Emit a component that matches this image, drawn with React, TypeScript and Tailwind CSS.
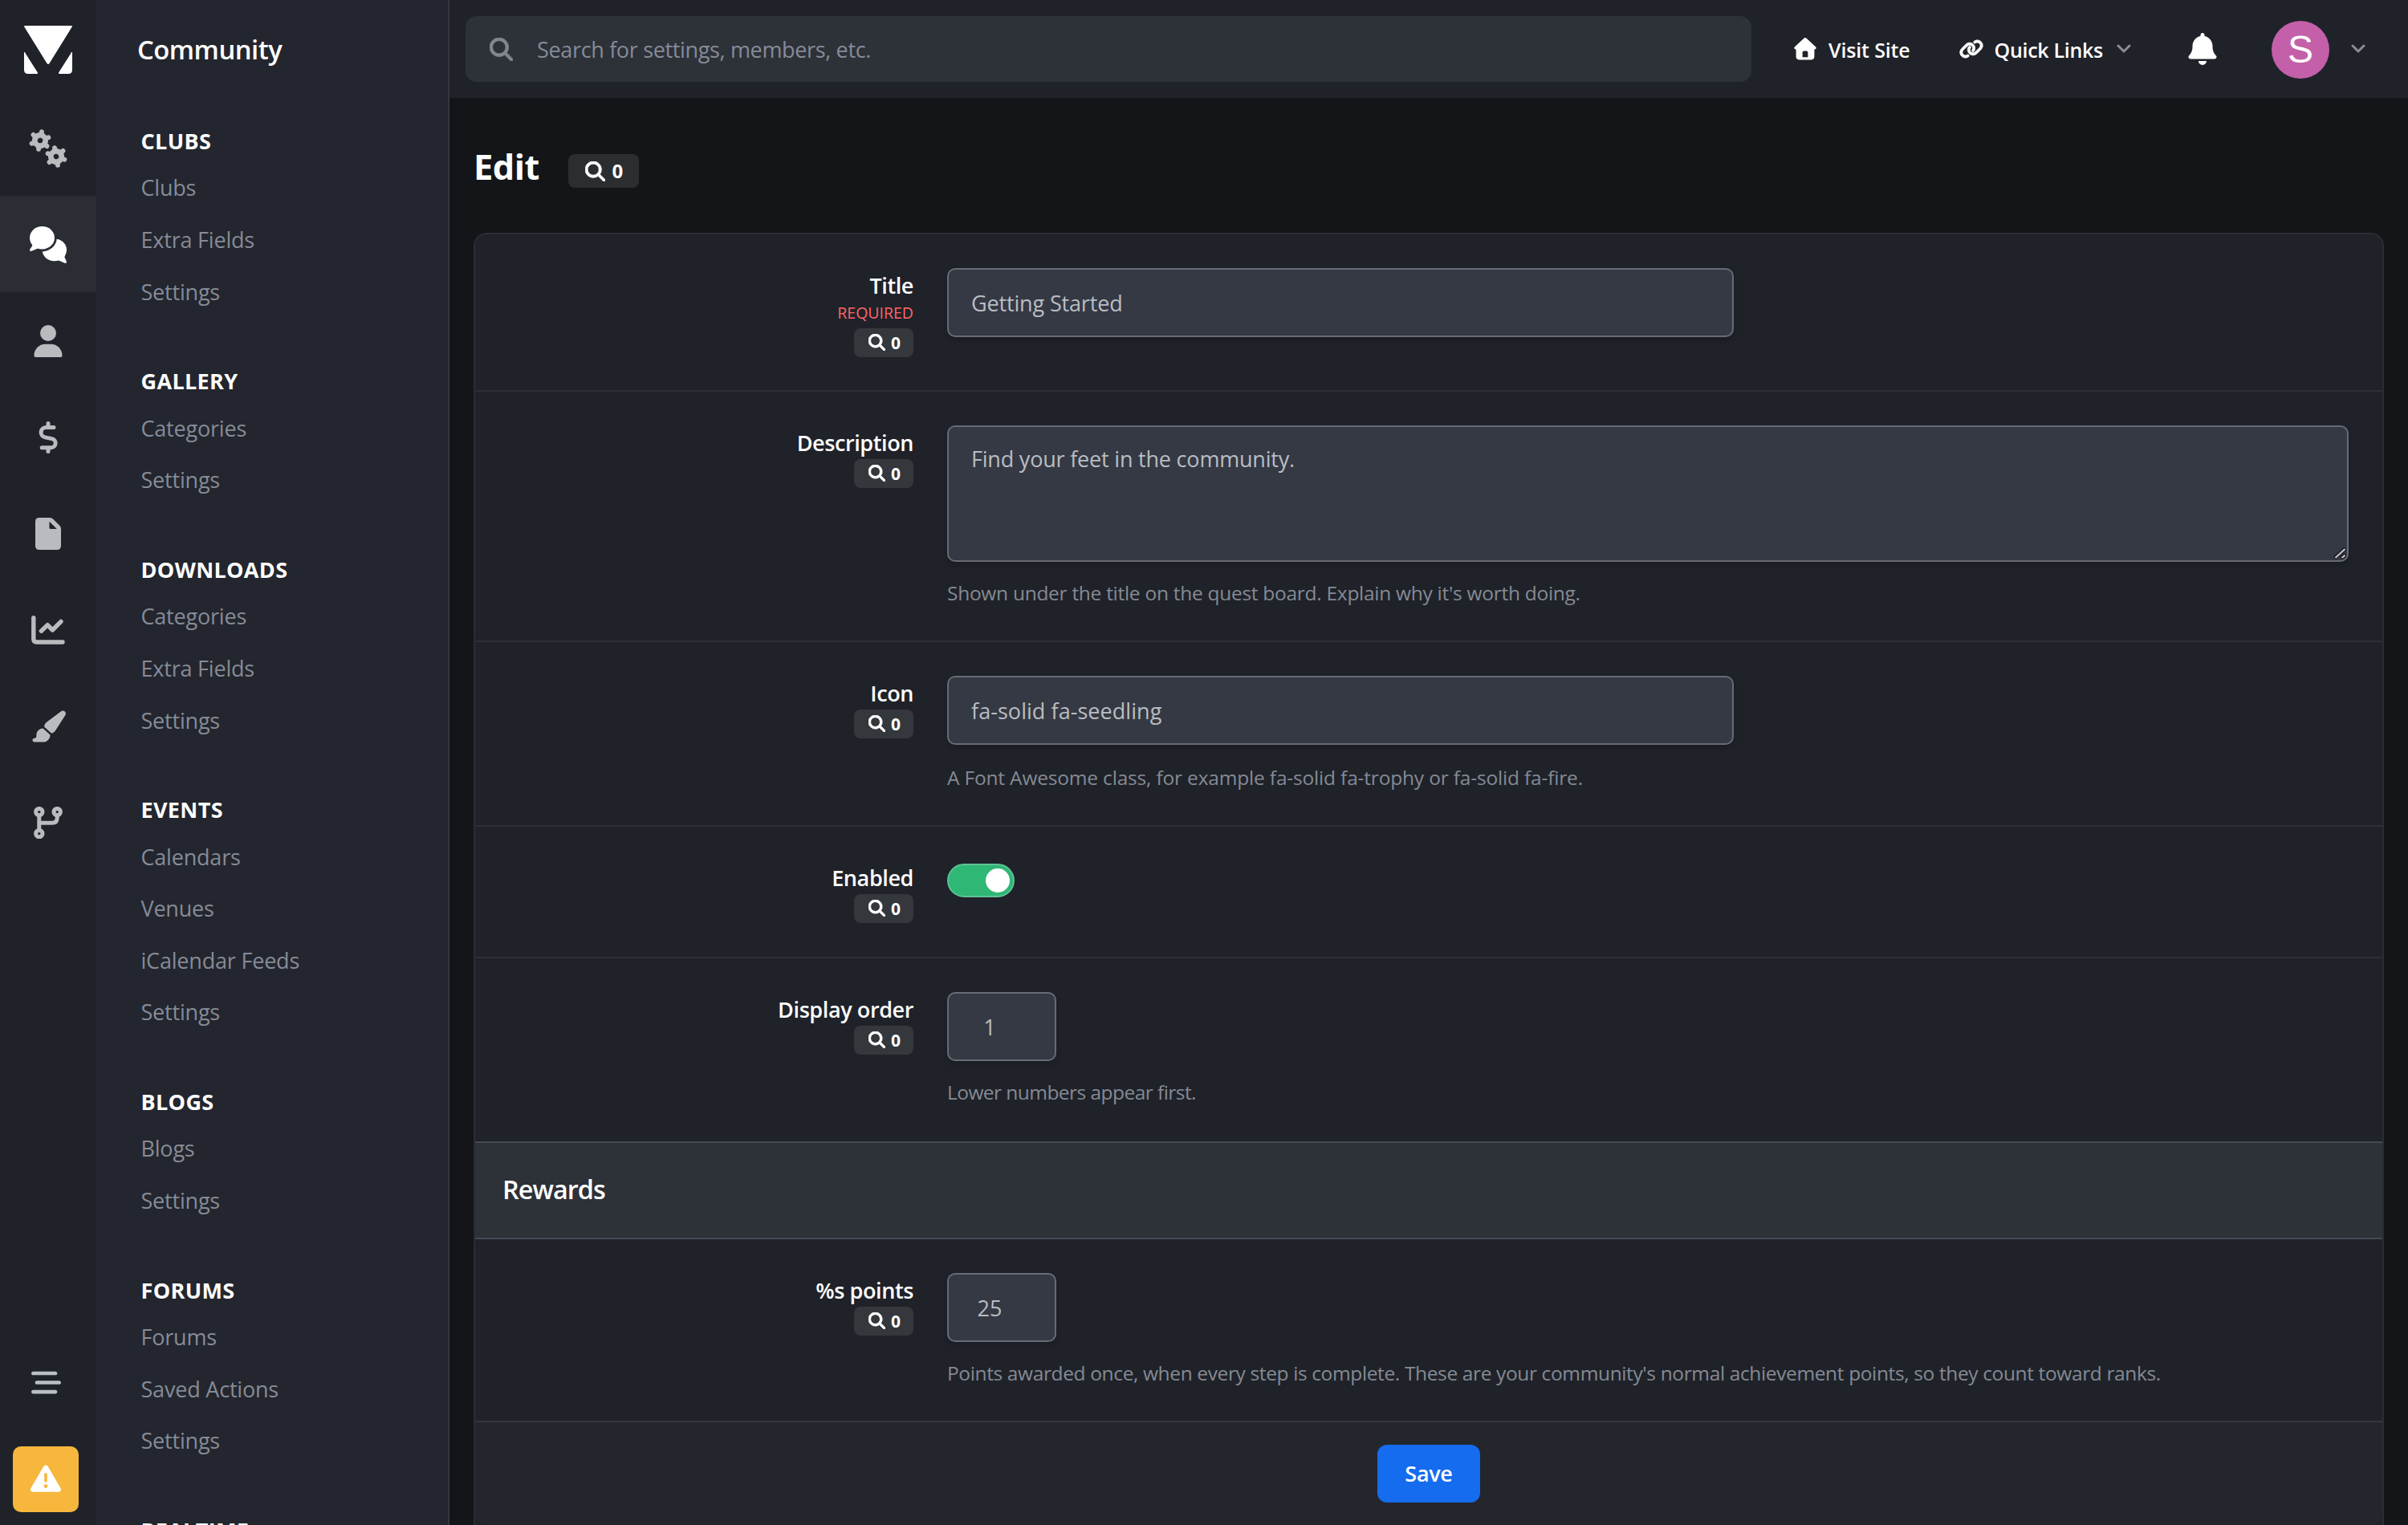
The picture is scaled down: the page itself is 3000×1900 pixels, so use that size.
import type { ReactNode } from "react";
import {
  FaBarsStaggered,
  FaBell,
  FaLink,
  FaMagnifyingGlass,
  FaPaintbrush,
  FaTriangleExclamation,
  FaUser,
} from "react-icons/fa6";

const sections = [
  { title: "Clubs", items: ["Clubs", "Extra Fields", "Settings"] },
  { title: "Gallery", items: ["Categories", "Settings"] },
  { title: "Downloads", items: ["Categories", "Extra Fields", "Settings"] },
  { title: "Events", items: ["Calendars", "Venues", "iCalendar Feeds", "Settings"] },
  { title: "Blogs", items: ["Blogs", "Settings"] },
  { title: "Forums", items: ["Forums", "Saved Actions", "Settings"] },
  { title: "Realtime", items: [] },
];

function Logo() {
  return (
    <svg width="60" height="60" viewBox="0 0 60 60" fill="#fff">
      <path d="M1 0H59Q60.6 0 59.7 1.6L31.5 47Q30 49 28.5 47L.3 1.6Q-.6 0 1 0Z" />
      <path d="M0 33.5Q0 32 .9 33.3L16.8 58.2Q17.8 60 16 60H5Q0 60 0 55Z" />
      <path d="M60 33.5Q60 32 59.1 33.3L43.2 58.2Q42.2 60 44 60H55Q60 60 60 55Z" />
    </svg>
  );
}

function Gear({ cx, cy, turn }: { cx: number; cy: number; turn: number }) {
  return (
    <g transform={`translate(${cx} ${cy}) rotate(${turn})`} stroke="currentColor" fill="none">
      <circle r="6.7" strokeWidth="6.8" />
      {[0, 60, 120, 180, 240, 300].map((a) => (
        <line
          key={a}
          y1="-8"
          y2="-11"
          strokeWidth="6"
          strokeLinecap="round"
          transform={`rotate(${a})`}
        />
      ))}
    </g>
  );
}

function GearsIcon() {
  return (
    <svg width="48" height="48" viewBox="0 0 48 48">
      <Gear cx={14} cy={14} turn={10} />
      <Gear cx={34} cy={34} turn={-10} />
    </svg>
  );
}

function CommentsIcon() {
  return (
    <svg width="46" height="46" viewBox="0 0 46 46" fill="currentColor">
      <ellipse cx="30.8" cy="29.3" rx="15.2" ry="13.9" />
      <path d="M44.6 34 43.4 38.6 45.8 43.4Q46.6 46.4 43.6 45.8L35 42Z" />
      <ellipse cx="15.5" cy="14.2" rx="18.3" ry="17.2" fill="#2b2d34" />
      <path d="M1.4 19 3.4 24 .3 28.4Q-.6 31.4 2.4 30.8L11.5 27Z" />
      <ellipse cx="15.5" cy="14.2" rx="15.5" ry="14.2" />
    </svg>
  );
}

function DollarIcon() {
  return (
    <svg width="24" height="40" viewBox="0 0 24 40" fill="none" stroke="currentColor" strokeWidth="5" strokeLinecap="round">
      <path d="M19 7.4H9.3A6.3 6.3 0 0 0 8.3 19.9L16.6 21.6A5.6 5.6 0 0 1 15.6 32.7H4.2" />
      <path d="M12 2.5V7M12 33V37.5" />
    </svg>
  );
}

function FileIcon() {
  return (
    <svg width="32" height="40" viewBox="0 0 32 40" fill="currentColor" fillRule="evenodd">
      <path d="M5 0H18.4Q20.4 0 21.9 1.5L30.5 10.1Q32 11.6 32 13.6V35Q32 40 27 40H5Q0 40 0 35V5Q0 0 5 0ZM17.5 4.7V12.4Q17.5 14 19.1 14H26.8Z" />
    </svg>
  );
}

function ChartIcon() {
  return (
    <svg width="42" height="36" viewBox="0 0 42 36" fill="none" stroke="currentColor" strokeWidth="5.4" strokeLinecap="round" strokeLinejoin="round">
      <path d="M2.8 2.8V29Q2.8 33 6.8 33H39" />
      <path d="M12.4 19.2 20.2 11.6 26.4 18 37 7.4" />
    </svg>
  );
}

function BranchIcon() {
  return (
    <svg width="36" height="40" viewBox="0 0 36 40" fill="none" stroke="currentColor" strokeWidth="5">
      <circle cx="6.8" cy="6.6" r="4.2" />
      <circle cx="29.2" cy="6.6" r="4.2" />
      <circle cx="6.8" cy="33.6" r="4.2" />
      <path d="M6.8 11V29M6.8 20.2H23Q29.2 20.2 29.2 14V11" />
    </svg>
  );
}

function HomeIcon() {
  return (
    <svg width="28" height="28" viewBox="0 0 28 28" fill="#fff" fillRule="evenodd">
      <path d="M12.4.8Q14 -.6 15.6.8L27.2 11.6Q28.6 13.8 26.2 14.4H25.4V23.6Q25.4 27.4 21.6 27.4H6.4Q2.6 27.4 2.6 23.6V14.4H1.8Q-.6 13.8.8 11.6ZM12.6 16.6Q10.6 16.6 10.6 18.6V24.2H17.4V18.6Q17.4 16.6 15.4 16.6Z" />
    </svg>
  );
}

function Chevron() {
  return (
    <svg width="18" height="12" viewBox="0 0 18 12" fill="none" stroke="#8b8d91" strokeWidth="3" strokeLinecap="round" strokeLinejoin="round">
      <path d="M2 2 9 9 16 2" />
    </svg>
  );
}

function RailItem({ active, children }: { active?: boolean; children: ReactNode }) {
  return (
    <a
      className={`flex h-[120px] w-full shrink-0 items-center justify-center pt-[2px] ${
        active ? "bg-[#2b2d34] text-white" : "text-[#b9bbbe]"
      }`}
    >
      {children}
    </a>
  );
}

function Rail() {
  return (
    <aside className="flex h-full w-[120px] shrink-0 flex-col items-center bg-[#1f2229]">
      <div className="flex h-[124px] shrink-0 items-center">
        <Logo />
      </div>
      <RailItem>
        <GearsIcon />
      </RailItem>
      <RailItem active>
        <CommentsIcon />
      </RailItem>
      <RailItem>
        <FaUser size={40} />
      </RailItem>
      <RailItem>
        <DollarIcon />
      </RailItem>
      <RailItem>
        <FileIcon />
      </RailItem>
      <RailItem>
        <ChartIcon />
      </RailItem>
      <RailItem>
        <FaPaintbrush size={44} />
      </RailItem>
      <RailItem>
        <BranchIcon />
      </RailItem>
      <div className="mt-auto flex flex-col items-center gap-[61px] pr-[6px] pb-4">
        <FaBarsStaggered size={37} className="text-[#b9bec7]" />
        <button className="flex h-[82px] w-[82px] items-center justify-center rounded-[10px] bg-[#f6b73c] pb-[2px] text-white">
          <FaTriangleExclamation size={38} />
        </button>
      </div>
    </aside>
  );
}

function SubNav() {
  return (
    <nav className="flex h-full w-[440px] shrink-0 flex-col overflow-hidden border-r-2 border-[#34373f] bg-[#23262e]">
      <h2 className="h-[122px] shrink-0 pl-[51px] text-[32.8px] leading-[123px] font-semibold tracking-[-0.5px] text-white">
        Community
      </h2>
      <div className="flex flex-col gap-[54.1px] pt-7 pl-[55.5px]">
        {sections.map((section) => (
          <div key={section.title}>
            <h3 className="h-[51.4px] text-[27px] leading-[51.4px] font-bold tracking-[0.35px] text-white uppercase">
              {section.title}
            </h3>
            <ul>
              {section.items.map((item) => (
                <li
                  key={item}
                  className="h-[64.6px] text-[27px] leading-[65.4px] tracking-[-0.2px] text-[#868b97]"
                >
                  {item}
                </li>
              ))}
            </ul>
          </div>
        ))}
      </div>
    </nav>
  );
}

function TopBar() {
  return (
    <header className="flex h-[122px] shrink-0 items-center bg-[#1f2229] pl-5">
      <div className="flex h-[82px] w-[1602px] items-center rounded-[14px] bg-[#2d3138] pl-[30px]">
        <FaMagnifyingGlass size={29} stroke="#83868c" strokeWidth="14" className="text-[#83868c]" />
        <span className="pt-[2px] pl-[30px] text-[27px] tracking-[-0.34px] text-[#868b98]">
          Search for settings, members, etc.
        </span>
      </div>
      <a className="ml-[53px] flex items-center gap-[15px] text-[25px] font-semibold tracking-[-0.15px] text-white">
        <HomeIcon />
        <span className="pt-[3px]">Visit Site</span>
      </a>
      <a className="ml-[61px] flex items-center gap-[14px] text-[25px] font-semibold tracking-[-0.3px] text-white">
        <FaLink size={30} stroke="#fff" strokeWidth="20" />
        <span className="pt-[3px]">Quick Links</span>
      </a>
      <span className="ml-[17px]">
        <Chevron />
      </span>
      <FaBell size={40} className="ml-[69px] text-white" />
      <div className="mt-[2px] ml-[66px] flex h-[72px] w-[72px] items-center justify-center rounded-full bg-[#c45fa9] font-['Liberation_Sans'] text-[48px] text-white">
        S
      </div>
      <span className="ml-[27px]">
        <Chevron />
      </span>
    </header>
  );
}

function Count() {
  return (
    <span className="flex h-9 w-[74px] items-center justify-center gap-[7px] rounded-[8px] bg-[#34373b] pl-[2px] text-[21px] leading-9 font-bold text-white">
      <FaMagnifyingGlass size={21} stroke="#fff" strokeWidth="22" className="mb-[2px]" />0
    </span>
  );
}

function Row({
  label,
  required,
  help,
  className,
  helpClass = "mt-5 tracking-[-0.28px]",
  children,
}: {
  label: string;
  required?: boolean;
  help?: string;
  className: string;
  helpClass?: string;
  children: ReactNode;
}) {
  return (
    <div className={`flex gap-[42px] border-[#2d3037] pt-[42px] pr-[42px] ${className}`}>
      <div className="flex w-[546px] shrink-0 flex-col items-end">
        <label className="-mb-px text-[27px] leading-[43px] font-semibold tracking-[-0.4px] text-white">
          {label}
        </label>
        {required && (
          <span className="mb-[5px] text-[19.5px] leading-[28px] font-medium text-[#ff6468]">
            REQUIRED
          </span>
        )}
        <Count />
      </div>
      <div className="min-w-0 flex-1">
        {children}
        {help && <p className={`text-[24.5px] leading-[37px] text-[#858a94] ${helpClass}`}>{help}</p>}
      </div>
    </div>
  );
}

const field =
  "block rounded-[10px] border-2 border-[#676b76] bg-[#353943] text-[27px] text-[#b9bdc3] shadow-[0_4px_6px_rgba(0,0,0,0.15)] outline-none";

export default function App() {
  return (
    <div className="flex h-[1900px] w-[3000px] overflow-hidden bg-[#131518] font-['Open_Sans',sans-serif]">
      <Rail />
      <SubNav />
      <div className="flex h-full min-w-0 flex-1 flex-col">
        <TopBar />
        <main className="flex min-h-0 flex-1 flex-col px-[30px]">
          <div className="flex h-[168px] shrink-0 items-center">
            <h1 className="pt-[3px] text-[43.4px] font-bold tracking-[-0.5px] text-white">Edit</h1>
            <span className="mt-[14px] ml-[36px] flex h-[42px] w-[88px] items-center justify-center gap-[8px] rounded-[8px] bg-[#2b2e31] pl-[2px] text-[24px] font-bold text-white">
              <FaMagnifyingGlass size={25} stroke="#fff" strokeWidth="16" />0
            </span>
          </div>

          <div className="h-[1640px] shrink-0 rounded-t-[16px] border-2 border-b-0 border-[#2a2d34] bg-[#1f2229]">
            <Row label="Title" required className="h-[196px] border-b-2">
              <input className={`${field} h-[86px] w-[980px] px-7 tracking-[-0.15px]`} defaultValue="Getting Started" />
            </Row>
            <Row
              label="Description"
              className="h-[312px] border-b-2"
              help="Shown under the title on the quest board. Explain why it's worth doing."
            >
              <div className="relative">
                <textarea
                  className={`${field} h-[170px] w-full resize-none px-7 pt-[18px] leading-[43px] tracking-[-0.2px]`}
                  defaultValue="Find your feet in the community."
                />
                {/* resize grip */}
                <svg
                  className="absolute right-[3px] bottom-[3px]"
                  width="16"
                  height="16"
                  viewBox="0 0 16 16"
                >
                  <path d="M1.5 14.5 15 2M9.5 14.5 15 10" stroke="#1a1c22" strokeWidth="5" />
                  <path d="M2.5 14 14.5 3M10.5 14 14.5 10.8" stroke="#c3c5c9" strokeWidth="2.2" />
                </svg>
              </div>
            </Row>
            <Row
              label="Icon"
              className="h-[230px] border-b-2"
              helpClass="mt-[22px] tracking-[-0.18px]"
              help="A Font Awesome class, for example fa-solid fa-trophy or fa-solid fa-fire."
            >
              <input className={`${field} h-[86px] w-[980px] px-7 tracking-[0.05px]`} defaultValue="fa-solid fa-seedling" />
            </Row>
            <Row label="Enabled" className="h-[164px] border-b-2">
              <div className="mt-1 flex h-[42px] w-[84px] items-center justify-end rounded-full border-2 border-[#5fc294] bg-[#2fb775] pr-1">
                <span className="h-[30px] w-[30px] rounded-full bg-white" />
              </div>
            </Row>
            <Row
              label="Display order"
              className="h-[228px]"
              helpClass="mt-5 tracking-[-0.55px]"
              help="Lower numbers appear first."
            >
              <input className={`${field} h-[86px] w-[136px] pr-[30px] text-center`} defaultValue="1" />
            </Row>

            <h2 className="h-[122px] border-y-2 border-[#444955] bg-[#2d3138] pl-[34px] text-[32.4px] leading-[115px] font-semibold tracking-[-0.95px] text-white">
              Rewards
            </h2>

            <Row
              label="%s points"
              className="h-[226px]"
              helpClass="mt-5 tracking-[-0.37px]"
              help="Points awarded once, when every step is complete. These are your community's normal achievement points, so they count toward ranks."
            >
              <input className={`${field} h-[86px] w-[136px] pr-[30px] text-center`} defaultValue="25" />
            </Row>
            <div className="flex h-[130px] items-center justify-center rounded-b-[14px] border-t-2 border-[#34373f] bg-[#23262d]">
              <button className="h-[72px] w-[128px] rounded-[12px] bg-[#156cee] text-[27px] font-semibold tracking-[-0.3px] text-white">
                Save
              </button>
            </div>
          </div>
        </main>
      </div>
    </div>
  );
}
